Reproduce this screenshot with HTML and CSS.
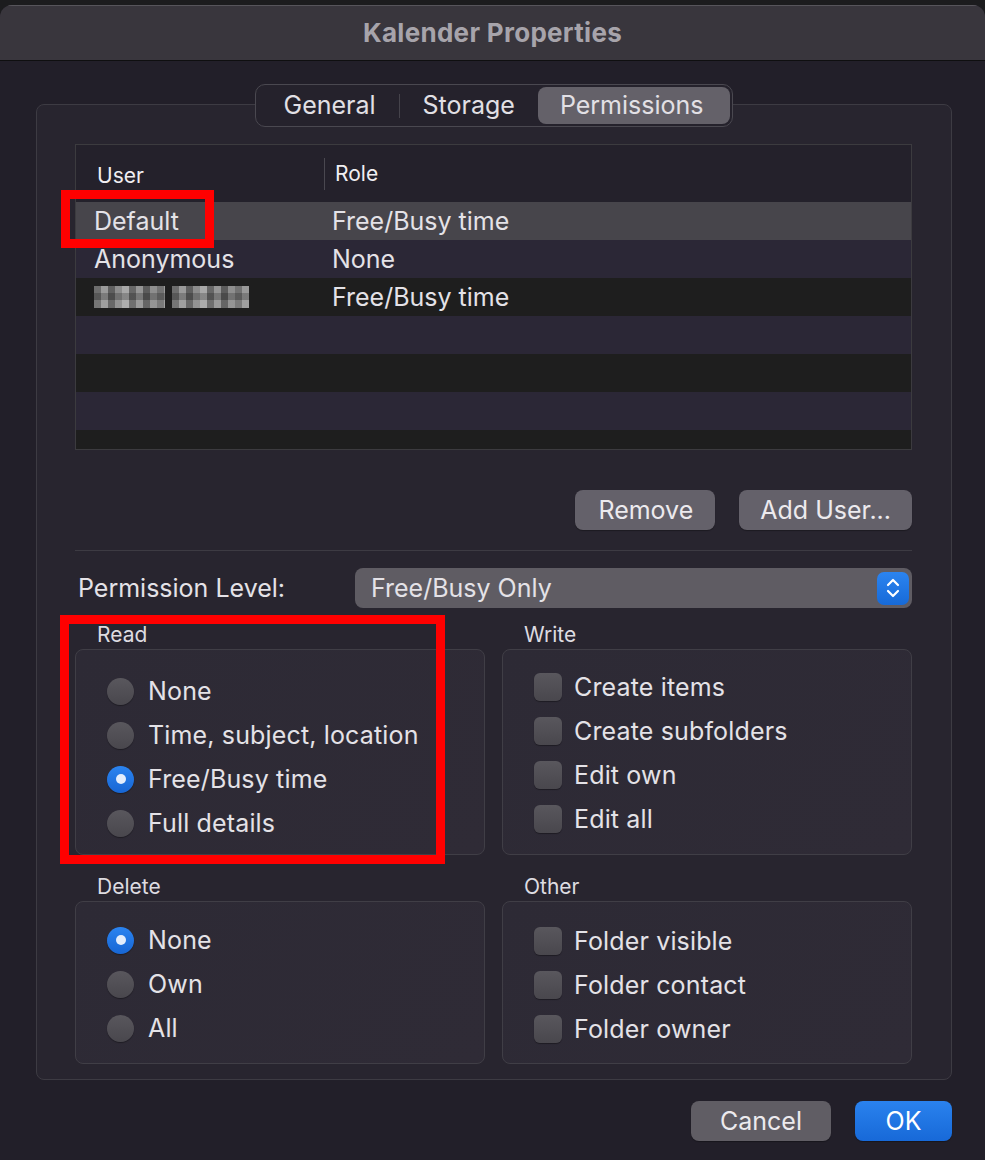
FILE: index.html
```html
<!DOCTYPE html>
<html lang="en">
<head>
  <meta charset="UTF-8">
  <meta name="viewport" content="width=device-width, initial-scale=1.0">
  <title>Kalender Properties</title>
  <link rel="stylesheet" href="styles.css">
</head>
<body>
  <div class="window">
    <div class="titlebar">Kalender Properties</div>

    <div class="content">
      <div class="tabs">
        <div class="tab">General</div>
        <div class="tab-divider"></div>
        <div class="tab">Storage</div>
        <div class="tab active">Permissions</div>
      </div>

      <div class="tabbox">
        <div class="user-table">
          <div class="thead">
            <div class="th th-user">User</div>
            <div class="th th-role">Role</div>
          </div>
          <div class="row selected">
            <div class="cell-user">Default</div>
            <div class="cell-role">Free/Busy time</div>
          </div>
          <div class="row odd">
            <div class="cell-user">Anonymous</div>
            <div class="cell-role">None</div>
          </div>
          <div class="row even">
            <div class="cell-user"><span class="blur blur-a"></span><span class="blur blur-b"></span></div>
            <div class="cell-role">Free/Busy time</div>
          </div>
          <div class="row odd"></div>
          <div class="row even"></div>
          <div class="row odd"></div>
          <div class="row even"></div>
        </div>

        <div class="table-actions">
          <button class="btn">Remove</button>
          <button class="btn">Add User...</button>
        </div>

        <div class="separator"></div>

        <div class="level-row">
          <span class="level-label">Permission Level:</span>
          <div class="popup">
            <span>Free/Busy Only</span>
            <span class="stepper">
              <svg width="16" height="24" viewBox="0 0 16 24">
                <path d="M3 9 L8 4 L13 9" fill="none" stroke="#fff" stroke-width="2.2" stroke-linecap="round" stroke-linejoin="round"/>
                <path d="M3 15 L8 20 L13 15" fill="none" stroke="#fff" stroke-width="2.2" stroke-linecap="round" stroke-linejoin="round"/>
              </svg>
            </span>
          </div>
        </div>

        <div class="groups">
          <div class="group">
            <div class="group-label">Read</div>
            <div class="group-box radios">
              <div class="option"><span class="radio"></span>None</div>
              <div class="option"><span class="radio"></span>Time, subject, location</div>
              <div class="option"><span class="radio checked"></span>Free/Busy time</div>
              <div class="option"><span class="radio"></span>Full details</div>
            </div>
          </div>
          <div class="group">
            <div class="group-label">Write</div>
            <div class="group-box checks">
              <div class="option"><span class="check"></span>Create items</div>
              <div class="option"><span class="check"></span>Create subfolders</div>
              <div class="option"><span class="check"></span>Edit own</div>
              <div class="option"><span class="check"></span>Edit all</div>
            </div>
          </div>
          <div class="group">
            <div class="group-label">Delete</div>
            <div class="group-box radios short">
              <div class="option"><span class="radio checked"></span>None</div>
              <div class="option"><span class="radio"></span>Own</div>
              <div class="option"><span class="radio"></span>All</div>
            </div>
          </div>
          <div class="group">
            <div class="group-label">Other</div>
            <div class="group-box checks short">
              <div class="option"><span class="check"></span>Folder visible</div>
              <div class="option"><span class="check"></span>Folder contact</div>
              <div class="option"><span class="check"></span>Folder owner</div>
            </div>
          </div>
        </div>
      </div>

      <div class="dialog-actions">
        <button class="btn btn-cancel">Cancel</button>
        <button class="btn btn-ok">OK</button>
      </div>
    </div>
  </div>

  <!-- red annotation boxes -->
  <div class="mark mark-default"></div>
  <div class="mark mark-read"></div>
</body>
</html>
```

FILE: styles.css
```css
body {
  margin: 0;
  background: #1c1c1e;
  font-family: Inter, "Open Sans", "Liberation Sans", sans-serif;
  color: #e4e2e7;
  position: relative;
}
.window {
  margin-top: 5px;
  height: 1155px;
  background: #221f29;
  border-radius: 12px 12px 0 0;
  overflow: hidden;
}
.titlebar {
  height: 56px;
  line-height: 54px;
  text-align: center;
  background: #39363d;
  border-top: 1px solid #57555b;
  box-sizing: border-box;
  border-bottom: 1px solid #0f0f10;
  font-size: 26px;
  font-weight: 700;
  color: #a7a4ab;
  letter-spacing: 0.3px;
}
.content {
  display: flex;
  flex-direction: column;
  padding: 0 33px 0 36px;
}
.tabs {
  position: relative;
  z-index: 1;
  align-self: center;
  display: flex;
  align-items: center;
  margin-top: 23px;
  height: 43px;
  box-sizing: border-box;
  padding: 2px;
  background: #25222c;
  border: 1px solid #4a4850;
  border-radius: 10px;
}
.tab {
  height: 37px;
  line-height: 37px;
  padding: 0 23px;
  font-size: 25px;
  color: #e2e0e5;
  border-radius: 8px;
}
.tab:first-child {
  padding-left: 26px;
}
.tab-divider {
  width: 1px;
  height: 24px;
  background: #45434b;
}
.tab.active {
  background: #646169;
  padding: 0 27px 0 22px;
}
.tabbox {
  margin-top: -23px;
  padding: 39px 39px 15px 38px;
  background: #28252f;
  border: 1px solid #3d3b43;
  border-radius: 8px;
}

/* user table */
.user-table {
  height: 306px;
  box-sizing: border-box;
  border: 1px solid #3c3b3f;
  background: #1e1e1e;
  overflow: hidden;
}
.thead {
  display: flex;
  align-items: center;
  height: 57px;
  background: #24212b;
  font-size: 21px;
  color: #f0eef2;
}
.th-user {
  width: 227px;
  padding-left: 21px;
  border-right: 1px solid #4a4850;
  height: 32px;
  line-height: 35px;
}
.th-role {
  padding-left: 10px;
  line-height: 35px;
}
.row {
  display: flex;
  align-items: center;
  height: 38px;
  font-size: 25px;
}
.row.selected {
  background: #47454b;
}
.row.odd {
  background: #2b2736;
}
.row.even {
  background: #1e1e1e;
}
.cell-user {
  width: 238px;
  padding-left: 18px;
  display: flex;
  align-items: center;
  gap: 7px;
}
.blur {
  display: inline-block;
  height: 22px;
  background:
    linear-gradient(to bottom, rgba(0,0,0,0) 0 7px, rgba(0,0,0,0.2) 7px 14px, rgba(255,255,255,0.06) 14px 22px),
    linear-gradient(to right, #6d6d6d 0 7px, #9a9a9a 7px 14px, #5f5f5f 14px 21px, #8c8c8c 21px 28px, #a8a8a8 28px 35px, #676767 35px 42px, #959595 42px 49px, #5c5c5c 49px 56px, #8e8e8e 56px 63px, #727272 63px 70px, #999 70px 77px);
}
.blur-a {
  width: 71px;
}
.blur-b {
  width: 77px;
}

.table-actions {
  display: flex;
  justify-content: flex-end;
  gap: 24px;
  margin-top: 40px;
}
.btn {
  height: 40px;
  padding: 0 21px;
  border: none;
  border-radius: 8px;
  background: #64616a;
  color: #eceaee;
  font-family: inherit;
  font-size: 25px;
  box-shadow: 0 1px 1px rgba(0,0,0,0.3);
}
.table-actions .btn:first-child {
  padding: 0 22px 0 23px;
}
.separator {
  height: 1px;
  background: #3d3b43;
  margin-top: 20px;
}
.level-row {
  display: flex;
  align-items: center;
  margin-top: 17px;
}
.level-label {
  width: 277px;
  padding-left: 3px;
  font-size: 25px;
}
.popup {
  flex: 1;
  height: 40px;
  display: flex;
  align-items: center;
  justify-content: space-between;
  padding: 0 3px 0 16px;
  border-radius: 8px;
  background: #5f5c63;
  font-size: 25px;
}
.stepper {
  width: 32px;
  height: 33px;
  border-radius: 7px;
  background: linear-gradient(#2b84f0, #176ad8);
  display: flex;
  align-items: center;
  justify-content: center;
}

/* option groups */
.groups {
  display: grid;
  grid-template-columns: 1fr 1fr;
  column-gap: 17px;
  row-gap: 19px;
  margin-top: 14px;
}
.group-label {
  height: 24px;
  line-height: 26px;
  padding-left: 22px;
  margin-bottom: 3px;
  font-size: 21px;
  color: #dedce1;
}
.group-box {
  border: 1px solid #403e46;
  border-radius: 8px;
  background: linear-gradient(135deg, #2d2a35, #2f2b36);
  font-size: 25px;
  letter-spacing: 0.15px;
}
.group-box.radios {
  padding: 19px 0 9px 31px;
}
.group-box.checks {
  padding: 15px 0 13px 31px;
}
.group-box.radios.short {
  padding: 16px 0 13px 31px;
}
.group-box.checks.short {
  padding: 17px 0 12px 31px;
}
.option {
  display: flex;
  align-items: center;
  height: 44px;
}
.radio {
  width: 27px;
  height: 27px;
  border-radius: 50%;
  margin-right: 14px;
  background: linear-gradient(#59575d, #49474d);
  box-shadow: 0 1px 1px rgba(0,0,0,0.35);
  position: relative;
}
.radio.checked {
  background: linear-gradient(#2b84f0, #1766d4);
}
.radio.checked::after {
  content: "";
  position: absolute;
  left: 8.5px;
  top: 8.5px;
  width: 10px;
  height: 10px;
  border-radius: 50%;
  background: #e4eefc;
}
.check {
  width: 28px;
  height: 28px;
  border-radius: 6px;
  margin-right: 12px;
  background: linear-gradient(#59575d, #49474d);
  box-shadow: 0 1px 1px rgba(0,0,0,0.35);
}

.dialog-actions {
  display: flex;
  justify-content: flex-end;
  gap: 24px;
  margin-top: 21px;
}
.btn-cancel {
  width: 140px;
  background: #605d64;
}
.btn-ok {
  width: 97px;
  background: linear-gradient(#2a82ee, #1769d8);
  color: #fff;
}

.mark {
  position: absolute;
  border: 9px solid #ff0000;
  box-sizing: border-box;
}
.mark-default {
  left: 61px;
  top: 190px;
  width: 153px;
  height: 58px;
}
.mark-read {
  left: 60px;
  top: 615px;
  width: 385px;
  height: 249px;
}
```
